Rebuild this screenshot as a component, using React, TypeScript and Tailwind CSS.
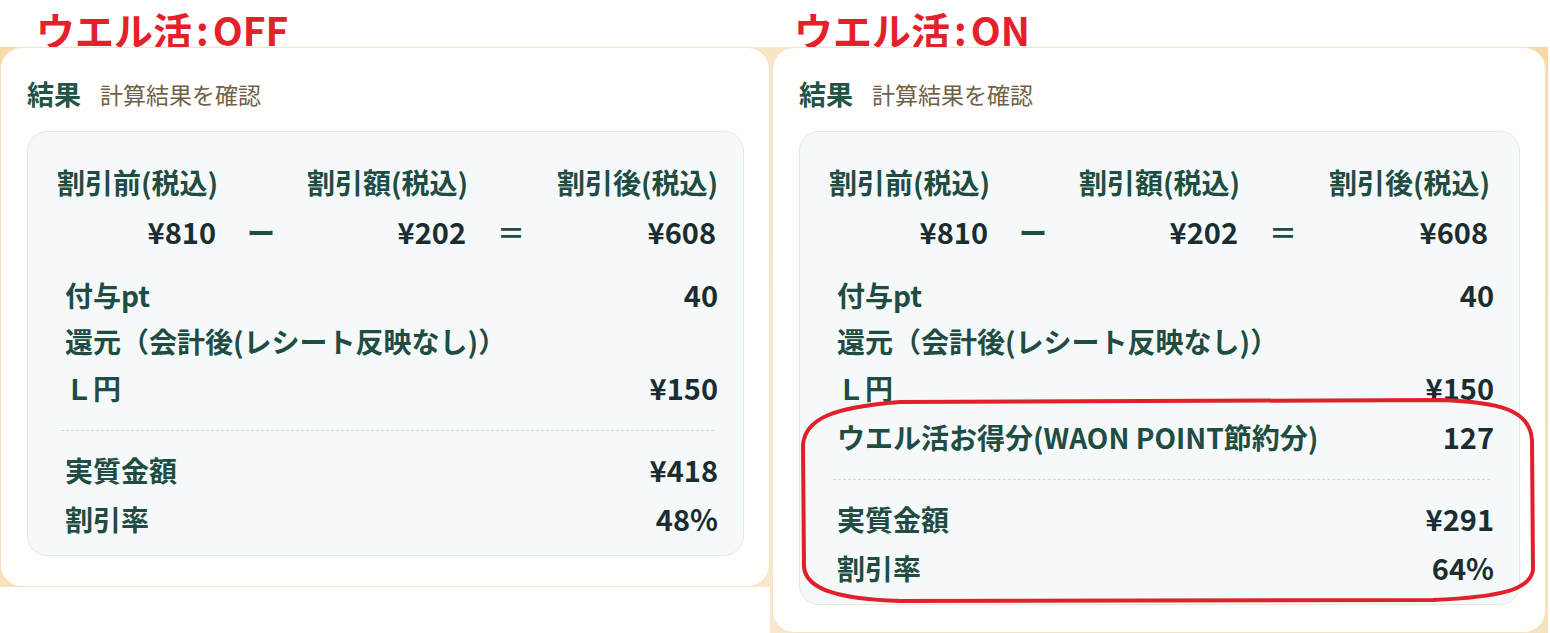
import React from 'react';

type Row = { label: string; value?: string; h: string };

const ff = "font-['Noto_Sans_CJK_JP','Noto_Sans',sans-serif]";

const Equation = () => (
  <div className="grid grid-cols-[162px_88px_162px_88px_162px] font-bold">
    <div className="h-[40px] flex items-center whitespace-nowrap text-[28px] text-[#204c42]">割引前(税込)</div>
    <div />
    <div className="h-[40px] flex items-center whitespace-nowrap text-[28px] text-[#204c42]">割引額(税込)</div>
    <div />
    <div className="h-[40px] flex items-center whitespace-nowrap text-[28px] text-[#204c42]">割引後(税込)</div>

    <div className="h-[60px] flex items-center justify-end pr-[3px] text-[29px] text-[#1c2d31]">¥810</div>
    <div className="h-[60px] flex items-center justify-center text-[28px] text-[#204c42] pr-[4px]">ー</div>
    <div className="h-[60px] flex items-center justify-end pr-[3px] text-[29px] text-[#1c2d31]">¥202</div>
    <div className="h-[60px] flex items-center justify-center text-[28px] text-[#204c42] pr-[4px]">＝</div>
    <div className="h-[60px] flex items-center justify-end pr-[3px] text-[29px] text-[#1c2d31]">¥608</div>
  </div>
);

const LineRow = ({ label, value, h }: Row) => (
  <div className={`${h} flex items-center justify-between pl-[8px] font-bold whitespace-nowrap`}>
    <span className="text-[28px] text-[#204c42]">{label}</span>
    {value && <span className="text-[29px] text-[#1c2d31]">{value}</span>}
  </div>
);

const ResultCard = ({ welkatsu, total, rate }: { welkatsu: boolean; total: string; rate: string }) => (
  <div className="h-full rounded-[22px] bg-[#fffefd] border border-[#f3e4c6] pt-[30px] pl-[26px] pr-[25px]">
    {/* header */}
    <div className="h-[32px] flex items-center gap-[19px]">
      <span className="text-[27px] font-bold text-[#235446]">結果</span>
      <span className="text-[23px] text-[#6e6148]">計算結果を確認</span>
    </div>

    {/* inner box */}
    <div className="mt-[21px] rounded-[20px] bg-[#f6f9fa] border border-[#e2e9eb] pt-[30px] pb-[11px] pl-[29px] pr-[25px]">
      <Equation />

      <div className="mt-[10px]">
        <LineRow label="付与pt" value="40" h="h-[46px]" />
        <LineRow label="還元（会計後(レシート反映なし)）" h="h-[46px]" />
        <LineRow label="Ｌ円" value="¥150" h="h-[48px]" />
        {welkatsu && <LineRow label="ウエル活お得分(WAON POINT節約分)" value="127" h="h-[49px]" />}
      </div>

      <div className="mt-[18px] mx-[4px] border-t border-dashed border-[#cfd8db]" />

      <div className="mt-[15px]">
        <LineRow label="実質金額" value={total} h="h-[48px]" />
        <LineRow label="割引率" value={rate} h="h-[50px]" />
      </div>
    </div>
  </div>
);

const Title = ({ state, pl }: { state: string; pl: string }) => (
  <div className={`h-[47px] pt-[7px] ${pl} text-[39px] leading-[44px] font-bold text-[#e4202a] whitespace-nowrap`}>
    ウエル活<span className="mx-[4px]">:</span>{state}
  </div>
);

export default function App() {
  return (
    <div className={`relative w-[1550px] h-[633px] bg-white overflow-hidden flex ${ff}`}>
      {/* OFF */}
      <div className="w-[770px] flex flex-col">
        <Title state="OFF" pl="pl-[36px]" />
        <div className="h-[540px] bg-[radial-gradient(circle_at_0%_0%,#f6d9a8,#f9e9cb)]">
          <ResultCard welkatsu={false} total="¥418" rate="48%" />
        </div>
      </div>

      {/* ON */}
      <div className="w-[778px] flex flex-col">
        <Title state="ON" pl="pl-[24px]" />
        <div className="h-[600px] pl-[2px] pr-[2px] bg-[radial-gradient(circle_at_100%_0%,#f6d9a8,#f9e9cb)]">
          <ResultCard welkatsu total="¥291" rate="64%" />
        </div>
      </div>

      {/* hand-drawn highlight */}
      <svg className="absolute left-0 top-0 pointer-events-none" width="1550" height="633" viewBox="0 0 1550 633">
        <path
          d="M 900 402 L 1440 400 C 1500 402, 1530 410, 1532 440 L 1533 570 C 1530 590, 1500 597, 1433 600 L 900 601 C 840 599, 806 590, 804 567 L 803 445 C 805 418, 835 407, 900 402 Z"
          fill="none"
          stroke="#e0202a"
          strokeWidth="4"
          strokeLinejoin="round"
        />
      </svg>
    </div>
  );
}
